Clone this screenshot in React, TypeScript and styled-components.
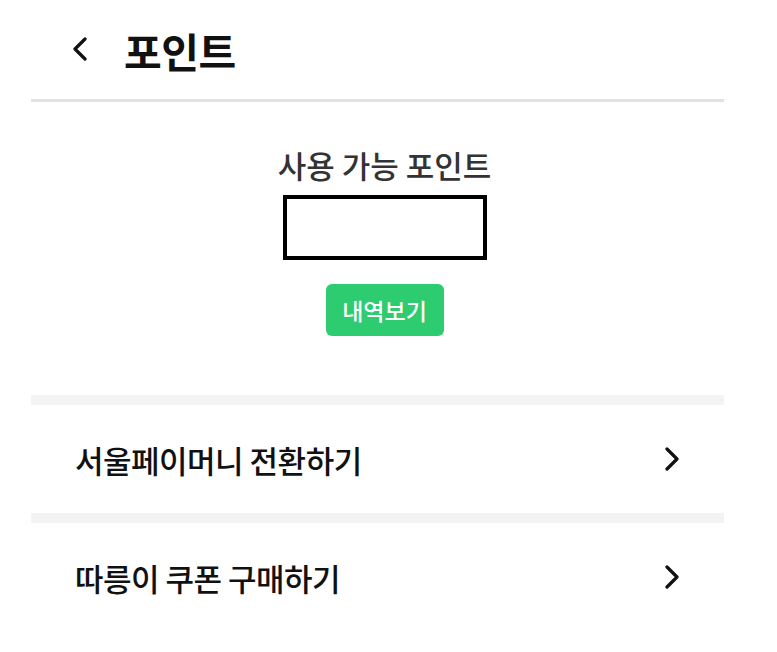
import * as React from 'react';
import styled, { createGlobalStyle } from 'styled-components';

const GlobalStyle = createGlobalStyle`
  body {
    margin: 0;
    background: #ffffff;
    font-family: "Noto Sans CJK KR", "Noto Sans", sans-serif;
    color: #111111;
  }
`;

const menuItems = ['서울페이머니 전환하기', '따릉이 쿠폰 구매하기'];

function ChevronLeft() {
  return (
    <svg width="16" height="24" viewBox="0 0 16 24" fill="none">
      <path d="M13 2 L3 12 L13 22" stroke="#111" strokeWidth="3.2" strokeLinecap="round" strokeLinejoin="round" />
    </svg>
  );
}

function ChevronRight() {
  return (
    <svg width="16" height="24" viewBox="0 0 16 24" fill="none">
      <path d="M3 2 L13 12 L3 22" stroke="#111" strokeWidth="3.2" strokeLinecap="round" strokeLinejoin="round" />
    </svg>
  );
}

export default function App() {
  return (
    <>
      <GlobalStyle />
      <Page>
        <Header>
          <BackButton>
            <ChevronLeft />
          </BackButton>
          <Title>포인트</Title>
        </Header>

        <Summary>
          <SummaryLabel>사용 가능 포인트</SummaryLabel>
          <PointBox />
          <HistoryButton>내역보기</HistoryButton>
        </Summary>

        {menuItems.map((label) => (
          <React.Fragment key={label}>
            <Band />
            <MenuRow>
              <MenuLabel>{label}</MenuLabel>
              <ChevronRight />
            </MenuRow>
          </React.Fragment>
        ))}
      </Page>
    </>
  );
}

const Page = styled.div`
  width: 693px;
  margin-left: 31px;
  display: flex;
  flex-direction: column;
`;

const Header = styled.div`
  height: 99px;
  display: flex;
  align-items: center;
  gap: 36px;
  padding-left: 41px;
  border-bottom: 3px solid #e2e2e2;
`;

const BackButton = styled.div`
  display: flex;
  align-items: center;
  width: 16px;
  height: 24px;
  margin-bottom: 2px;
`;

const Title = styled.h1`
  margin: 0;
  font-size: 41px;
  font-weight: 700;
  letter-spacing: -0.5px;
  color: #111;
`;

const Summary = styled.div`
  display: flex;
  flex-direction: column;
  align-items: center;
  padding: 42px 0 0 14px;
  height: 293px;
  box-sizing: border-box;
`;

const SummaryLabel = styled.div`
  font-size: 31px;
  font-weight: 500;
  color: #333;
  line-height: 42px;
`;

const PointBox = styled.div`
  margin-top: 9px;
  width: 204px;
  height: 65px;
  border: 4px solid #000;
  box-sizing: border-box;
`;

const HistoryButton = styled.button`
  margin-top: 24px;
  width: 118px;
  height: 52px;
  border: none;
  border-radius: 6px;
  background: #2ecc71;
  color: #fff;
  font-family: inherit;
  font-size: 23px;
  font-weight: 500;
  padding: 0;
`;

const Band = styled.div`
  height: 10px;
  background: #f3f3f3;
`;

const MenuRow = styled.div`
  height: 108px;
  display: flex;
  align-items: center;
  justify-content: space-between;
  padding: 0 44px 0 44px;
`;

const MenuLabel = styled.span`
  font-size: 31px;
  font-weight: 500;
  letter-spacing: -0.5px;
  color: #111;
`;
